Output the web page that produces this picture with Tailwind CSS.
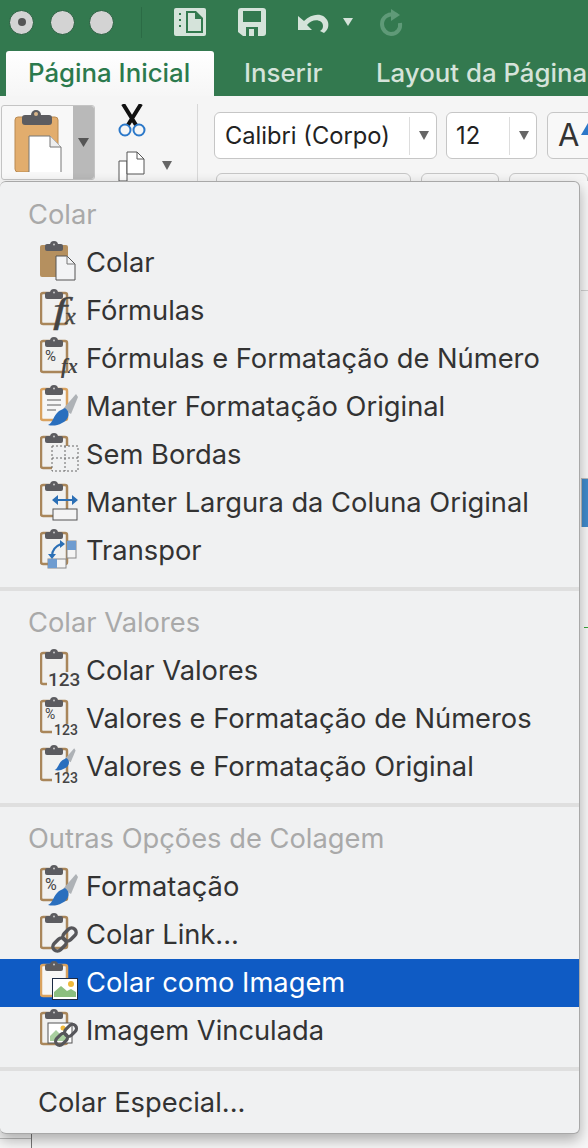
<!DOCTYPE html>
<html lang="pt-BR">
<head>
    <meta charset="UTF-8">
    <title>Colar</title>
    <script src="https://cdn.jsdelivr.net/npm/@tailwindcss/browser@4"></script>
</head>
<body class="bg-[#f7f7f7] font-['Inter',sans-serif]">

<!-- icones reutilizados do menu -->
<svg class="hidden">
    <symbol id="clip" viewBox="0 0 40 44">
        <rect x="1" y="4" width="26" height="31" rx="2" fill="#f1f1f0" stroke="#a9865a" stroke-width="2.500"/>
        <rect x="5" y="3" width="18" height="7" rx="2" fill="#5c5c60"/>
        <circle cx="14" cy="4" r="4" fill="#5c5c60"/>
        <circle cx="14" cy="3.500" r="1" fill="#c9c9c9"/>
    </symbol>
    <symbol id="clip-orange" viewBox="0 0 40 44">
        <rect x="1" y="4" width="26" height="31" rx="2" fill="#f6f6f6" stroke="#d9a25f" stroke-width="2.500"/>
        <rect x="5" y="3" width="18" height="7" rx="2" fill="#5c5c60"/>
        <circle cx="14" cy="4" r="4" fill="#5c5c60"/>
        <circle cx="14" cy="3.500" r="1" fill="#c9c9c9"/>
    </symbol>
    <symbol id="brush" viewBox="0 0 40 44">
        <path d="M23 24 L36 9 L38 12 L31 29Z" fill="#aeb2b6"/>
        <path d="M8 40 C13 38 13 31 19 26 L25 23 C31 27 29 35 22 38 C17 41 12 41 8 40Z" fill="#2a6fbe"/>
    </symbol>
    <symbol id="link" viewBox="0 0 40 44">
        <g fill="none" stroke="#56565a" stroke-width="3.500">
            <rect x="12" y="27" width="15" height="9" rx="4.500" transform="rotate(-45 19.500 31.500)"/>
            <rect x="22" y="17" width="15" height="9" rx="4.500" transform="rotate(-45 29.500 21.500)"/>
        </g>
    </symbol>
</svg>

<!-- barra verde -->
<div class="h-24 bg-[#33794f] relative overflow-hidden">
    <div class="flex items-center h-[52px] pl-[9px] pb-2">
        <span class="w-[25px] h-[25px] rounded-full bg-[#d3d3d3] border border-[#255c3c] flex items-center justify-center"><span class="w-2 h-2 rounded-full bg-[#555]"></span></span>
        <span class="w-[25px] h-[25px] rounded-full bg-[#d3d3d3] border border-[#255c3c] ml-4"></span>
        <span class="w-[25px] h-[25px] rounded-full bg-[#d3d3d3] border border-[#255c3c] ml-[14px]"></span>
        <span class="w-px h-[31px] bg-[#2b6b45] ml-[27px]"></span>
        <svg class="ml-8" width="32" height="28" viewBox="0 0 32 28">
            <path d="M2 0H30a2 2 0 0 1 2 2V26a2 2 0 0 1-2 2H2a2 2 0 0 1-2-2V2a2 2 0 0 1 2-2Z" fill="#d5e3da"/>
            <path d="M12 3H22L29 10V25H12Z" fill="#33794f"/>
            <path d="M14 5H21V11H27V23H14Z" fill="#d5e3da"/>
            <rect x="5" y="5" width="2" height="2" fill="#33794f"/><rect x="5" y="11" width="2" height="2" fill="#33794f"/><rect x="5" y="17" width="2" height="2" fill="#33794f"/>
        </svg>
        <svg class="ml-8" width="28" height="28" viewBox="0 0 28 28">
            <path d="M3 0H25a3 3 0 0 1 3 3V25a3 3 0 0 1-3 3H5L0 24V3a3 3 0 0 1 3-3Z" fill="#d5e3da"/>
            <rect x="5" y="3" width="18" height="11" fill="#33794f"/>
            <rect x="8" y="19" width="12" height="9" fill="#33794f"/>
            <rect x="11" y="21" width="5" height="7" fill="#d5e3da"/>
        </svg>
        <svg class="ml-8" width="31" height="22" viewBox="0 0 31 22">
            <path d="M0 5V19H14L9 14C14 7 25 8 25 15C25 17 24 19 22 20L26 22C30 19 31 15 30 11C27 2 15 1 6 10Z" fill="#d5e3da"/>
        </svg>
        <svg class="ml-[14px]" width="10" height="8" viewBox="0 0 10 8"><path d="M0 0H10L5 8Z" fill="#d5e3da"/></svg>
        <svg class="ml-[26px]" width="24" height="27" viewBox="0 0 24 27">
            <path d="M18 6C9 3 3 9 3 15C3 21 8 25 12 25C18 25 22 20 21 14" fill="none" stroke="#5f9a78" stroke-width="4"/>
            <path d="M12 0V12L21 6Z" fill="#5f9a78"/>
        </svg>
    </div>
    <div class="absolute left-[6px] top-[51px] w-[208px] h-[45px] rounded-t-[3px] bg-gradient-to-b from-white to-[#f6f6f6] text-[#2b7a4d] text-[25.800px] font-medium leading-[44px] pl-[22px] whitespace-nowrap">Página Inicial</div>
    <div class="absolute left-[244px] top-[51px] text-[#d5e3da] text-[25.800px] font-medium leading-[44px]">Inserir</div>
    <div class="absolute left-[376px] top-[51px] text-[#d5e3da] text-[25.800px] font-medium leading-[44px] whitespace-nowrap">Layout da Página</div>
</div>

<!-- faixa de opcoes -->
<div class="h-[85px] bg-[#f5f5f5] flex relative overflow-hidden">
    <div class="ml-px mt-[9px] w-[94px] h-[75px] shrink-0 flex rounded-[3px] border border-[#c4c4c4] bg-[#f8f8f8]">
        <svg class="ml-3 mt-1" width="48" height="62" viewBox="0 0 48 62">
            <rect x="1" y="7" width="43" height="55" rx="3" fill="#e2ad6d" stroke="#b98a52"/>
            <rect x="8" y="5" width="30" height="10" rx="3" fill="#5c5c60"/>
            <circle cx="22" cy="5" r="5" fill="#5c5c60"/>
            <circle cx="22" cy="4" r="2" fill="#d8b58a"/>
            <path d="M15 26H36L47 37V64H15Z" fill="#fff" stroke="#777"/>
            <path d="M36 26V37H47" fill="#eee" stroke="#777"/>
        </svg>
        <div class="ml-auto w-[21px] bg-[#b9b9b9] flex items-center justify-center rounded-r-[3px]">
            <svg width="11" height="9" viewBox="0 0 11 9"><path d="M0 0H11L5.500 9Z" fill="#555"/></svg>
        </div>
    </div>
    <div class="w-[74px] ml-[23px] shrink-0 relative">
        <svg class="absolute left-0 top-2" width="28" height="33" viewBox="0 0 28 33">
            <path d="M5 0L18 21M23 0L10 21" stroke="#111" stroke-width="4"/>
            <circle cx="7" cy="26" r="5.500" fill="none" stroke="#2b78c9" stroke-width="2"/>
            <circle cx="21" cy="26" r="5.500" fill="none" stroke="#2b78c9" stroke-width="2"/>
        </svg>
        <svg class="absolute left-0 top-[55px]" width="27" height="30" viewBox="0 0 27 30">
            <path d="M1 10H9V30H1Z" fill="#fff" stroke="#555"/>
            <path d="M9 1H19L26 8V23H9Z" fill="#fff" stroke="#555"/>
            <path d="M19 1V8H26" fill="none" stroke="#555"/>
        </svg>
        <svg class="absolute left-[44px] top-[65px]" width="10" height="9" viewBox="0 0 10 9"><path d="M0 0H10L5 9Z" fill="#666"/></svg>
    </div>
    <div class="w-px h-[77px] mt-2 ml-[5px] shrink-0 bg-[#d8d8d8]"></div>
    <div class="ml-4 mt-4 w-[223px] h-[47px] shrink-0 flex items-center rounded-md border border-[#c6c6c6] bg-white text-[23.700px] text-[#222]">
        <span class="pl-[10px] w-[194px] whitespace-nowrap">Calibri (Corpo)</span>
        <span class="w-px h-[38px] bg-[#ddd]"></span>
        <svg class="ml-[9px]" width="10" height="9" viewBox="0 0 10 9"><path d="M0 0H10L5 9Z" fill="#666"/></svg>
    </div>
    <div class="ml-[9px] mt-4 w-[91px] h-[47px] shrink-0 flex items-center rounded-md border border-[#c6c6c6] bg-white text-[23.700px] text-[#222]">
        <span class="pl-[9px] w-[62px]">12</span>
        <span class="w-px h-[38px] bg-[#ddd]"></span>
        <svg class="ml-[9px]" width="10" height="9" viewBox="0 0 10 9"><path d="M0 0H10L5 9Z" fill="#666"/></svg>
    </div>
    <div class="ml-[10px] mt-4 w-[60px] h-[47px] shrink-0 rounded-l-md border border-[#c6c6c6] bg-[#f8f8f8] pl-[10px] text-[31px] leading-[44px] text-[#333]">A</div>
    <svg class="absolute left-[581px] top-[27px]" width="7" height="12" viewBox="0 0 7 12"><path d="M0 12L7 0V12Z" fill="#2b78c9"/></svg>
    <!-- segunda linha de botoes, quase toda coberta pelo menu -->
    <div class="absolute left-[216px] top-[77px] w-[195px] h-3 rounded-t-md border border-[#c6c6c6]"></div>
    <div class="absolute left-[421px] top-[77px] w-[78px] h-3 rounded-t-md border border-[#c6c6c6]"></div>
    <div class="absolute left-[509px] top-[77px] w-[79px] h-3 rounded-t-md border border-[#c6c6c6]"></div>
</div>

<!-- restos da planilha atras do menu -->
<div class="absolute left-[581px] top-[290px] w-[7px] h-px bg-[#cfcfcf]"></div>
<div class="absolute left-[581px] top-[478px] w-[7px] h-[49px] bg-[#3f8acb] border-t border-l border-[#bbb]"></div>
<div class="absolute left-[584px] top-[627px] w-1 h-px bg-[#3aa53a]"></div>
<div class="absolute left-0 top-[1138px] w-[31px] h-px bg-[#bbb]"></div>
<div class="absolute left-[31px] top-[1134px] w-px h-[14px] bg-[#777]"></div>

<!-- menu de colar -->
<div class="absolute left-0 top-[181px] w-[580px] h-[953px] pt-[9px] bg-[#f0f1f2] rounded-md border-r border-b border-t border-[#a8a8a8] shadow-[0_6px_14px_rgba(0,0,0,0.3)] text-[27.300px] text-[#333]">

    <div class="h-12 leading-[47px] pl-[28px] text-[#a9a9a9]">Colar</div>

    <div class="h-12 flex items-center pl-10 gap-[6px]">
        <svg width="40" height="44" viewBox="0 0 40 44">
            <rect x="0" y="4" width="28" height="32" rx="2" fill="#b5905f"/>
            <rect x="5" y="3" width="18" height="7" rx="2" fill="#5c5c60"/><circle cx="14" cy="4" r="4" fill="#5c5c60"/><circle cx="14" cy="3.500" r="1" fill="#c9c9c9"/>
            <path d="M16 15H27L35 23V39H16Z" fill="#f3f4f6" stroke="#555"/><path d="M27 15V23H35" fill="none" stroke="#777"/>
        </svg>
        <span>Colar</span>
    </div>
    <div class="h-12 flex items-center pl-10 gap-[6px]">
        <svg width="40" height="44" viewBox="0 0 40 44">
            <use href="#clip"/>
            <text transform="translate(13 33) scale(1.400 1)" font-family="Liberation Serif" font-style="italic" font-size="36" fill="#444" stroke="#444" stroke-width="0.400">f</text>
            <text x="25" y="35" font-family="Liberation Serif" font-style="italic" font-size="24" fill="#444" stroke="#444" stroke-width="0.400">x</text>
        </svg>
        <span>Fórmulas</span>
    </div>
    <div class="h-12 flex items-center pl-10 gap-[6px]">
        <svg width="40" height="44" viewBox="0 0 40 44">
            <use href="#clip"/>
            <text x="5" y="24" font-family="Roboto" font-size="15" fill="#444">%</text>
            <text x="21" y="36" font-family="Liberation Serif" font-style="italic" font-weight="700" font-size="20" fill="#444">fx</text>
        </svg>
        <span>Fórmulas e Formatação de Número</span>
    </div>
    <div class="h-12 flex items-center pl-10 gap-[6px]">
        <svg width="40" height="44" viewBox="0 0 40 44">
            <use href="#clip-orange"/>
            <path d="M7 15H21M7 20H21M7 25H16" stroke="#aaa" stroke-width="2"/>
            <use href="#brush"/>
        </svg>
        <span>Manter Formatação Original</span>
    </div>
    <div class="h-12 flex items-center pl-10 gap-[6px]">
        <svg width="40" height="44" viewBox="0 0 40 44">
            <use href="#clip"/>
            <rect x="12" y="13" width="26" height="25" fill="#f0f1f2" stroke="#666" stroke-dasharray="2 2"/>
            <path d="M25 13V38M12 25H38" stroke="#666" stroke-dasharray="2 2"/>
        </svg>
        <span>Sem Bordas</span>
    </div>
    <div class="h-12 flex items-center pl-10 gap-[6px]">
        <svg width="40" height="44" viewBox="0 0 40 44">
            <use href="#clip"/>
            <path d="M17 19H33" stroke="#2b6fb5" stroke-width="2"/>
            <path d="M12 19L18 14V24ZM38 19L32 14V24Z" fill="#2b6fb5"/>
            <rect x="13" y="28" width="24" height="11" fill="#f4f4f4" stroke="#555"/>
        </svg>
        <span>Manter Largura da Coluna Original</span>
    </div>
    <div class="h-12 flex items-center pl-10 gap-[6px]">
        <svg width="40" height="44" viewBox="0 0 40 44">
            <use href="#clip"/>
            <rect x="27" y="12" width="9" height="17" fill="#f4f4f4" stroke="#888"/>
            <rect x="27" y="12" width="9" height="9" fill="#6f9cd0"/>
            <rect x="8" y="30" width="18" height="9" fill="#f4f4f4" stroke="#888"/>
            <rect x="8" y="30" width="9" height="9" fill="#6f9cd0"/>
            <path d="M12 27C12 20 16 17 21 15" fill="none" stroke="#2b6fb5" stroke-width="2"/>
            <path d="M8 25H16L12 30ZM20 11V19L25 15Z" fill="#2b6fb5"/>
        </svg>
        <span>Transpor</span>
    </div>

    <div class="h-1 mt-3 bg-[#dfdfdf]"></div>

    <div class="h-12 mt-2 leading-[47px] pl-[28px] text-[#a9a9a9]">Colar Valores</div>

    <div class="h-12 flex items-center pl-10 gap-[6px]">
        <svg width="40" height="44" viewBox="0 0 40 44">
            <use href="#clip"/>
            <rect x="7" y="23" width="32" height="16" fill="#f0f1f2"/>
            <text x="8" y="37" font-family="Roboto" font-size="19" font-weight="500" fill="#444">123</text>
        </svg>
        <span>Colar Valores</span>
    </div>
    <div class="h-12 flex items-center pl-10 gap-[6px]">
        <svg width="40" height="44" viewBox="0 0 40 44">
            <use href="#clip"/>
            <text x="5" y="22" font-family="Roboto" font-size="14" fill="#444">%</text>
            <rect x="12" y="27" width="27" height="12" fill="#f0f1f2"/>
            <text x="14" y="38" font-family="Roboto" font-size="14" font-weight="500" fill="#444">123</text>
        </svg>
        <span>Valores e Formatação de Números</span>
    </div>
    <div class="h-12 flex items-center pl-10 gap-[6px]">
        <svg width="40" height="44" viewBox="0 0 40 44">
            <use href="#clip"/>
            <g transform="translate(9 -3) scale(0.7)"><use href="#brush"/></g>
            <rect x="12" y="28" width="27" height="11" fill="#f0f1f2"/>
            <text x="14" y="38" font-family="Roboto" font-size="14" font-weight="500" fill="#444">123</text>
        </svg>
        <span>Valores e Formatação Original</span>
    </div>

    <div class="h-1 mt-3 bg-[#dfdfdf]"></div>

    <div class="h-12 mt-2 leading-[47px] pl-[28px] text-[#a9a9a9]">Outras Opções de Colagem</div>

    <div class="h-12 flex items-center pl-10 gap-[6px]">
        <svg width="40" height="44" viewBox="0 0 40 44">
            <use href="#clip"/>
            <text x="5" y="25" font-family="Roboto" font-size="16" fill="#444">%</text>
            <use href="#brush"/>
        </svg>
        <span>Formatação</span>
    </div>
    <div class="h-12 flex items-center pl-10 gap-[6px]">
        <svg width="40" height="44" viewBox="0 0 40 44">
            <use href="#clip"/>
            <use href="#link"/>
        </svg>
        <span>Colar Link...</span>
    </div>
    <div class="h-12 flex items-center pl-10 gap-[6px] bg-[#0f5bc4] text-white">
        <svg width="40" height="44" viewBox="0 0 40 44">
            <use href="#clip-orange"/>
            <rect x="12.500" y="17.500" width="25" height="21" fill="#fff" stroke="#1b2a44"/>
            <path d="M14 36V31L21 25L27 30L31 28L36 31V36Z" fill="#8cbf7f"/>
            <circle cx="31" cy="23" r="3" fill="#efb93b"/>
        </svg>
        <span>Colar como Imagem</span>
    </div>
    <div class="h-12 flex items-center pl-10 gap-[6px]">
        <svg width="40" height="44" viewBox="0 0 40 44">
            <use href="#clip"/>
            <rect x="8" y="14" width="24" height="20" fill="#fff" stroke="#555"/>
            <path d="M10 32V27L16 21L21 26L24 24L28 32Z" fill="#a9cf9f"/>
            <circle cx="23" cy="19" r="2.500" fill="#efb93b"/>
            <g transform="translate(4 2) scale(0.9)"><use href="#link"/></g>
        </svg>
        <span>Imagem Vinculada</span>
    </div>

    <div class="h-1 mt-3 bg-[#dfdfdf]"></div>

    <div class="h-12 mt-2 leading-[48px] pl-[38px]">Colar Especial...</div>
</div>

</body>
</html>
